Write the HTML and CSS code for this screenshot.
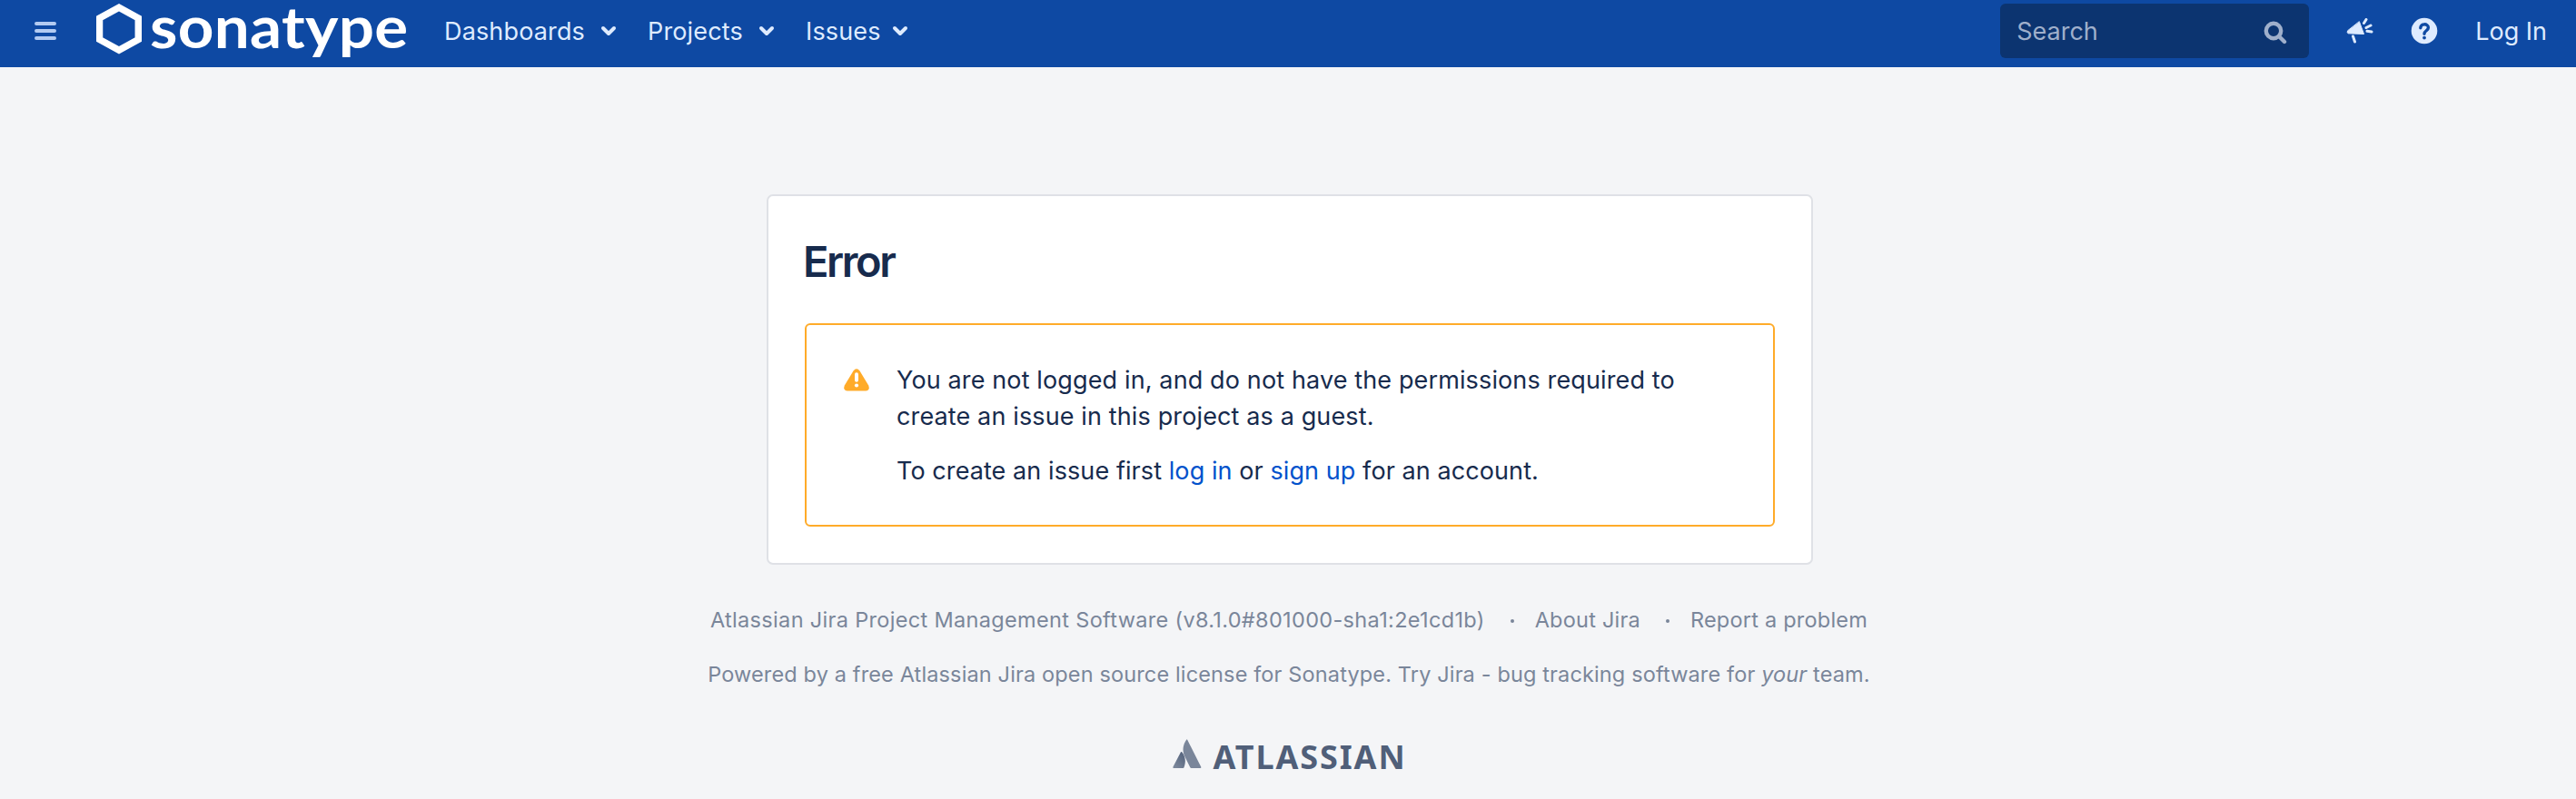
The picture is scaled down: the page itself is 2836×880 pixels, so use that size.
FILE: index.html
```html
<!DOCTYPE html>
<html lang="en">
<head>
<meta charset="utf-8">
<title>Error - Sonatype JIRA</title>
<link rel="stylesheet" href="styles.css">
</head>
<body>
<header class="header">
  <svg class="menu" width="24" height="20" viewBox="0 0 24 20"><path d="M2 2h20M2 10h20M2 18h20"/></svg>
  <a class="brand">
    <svg width="50" height="58" viewBox="0 0 50 58"><path d="M3.500 16 25 4.300 46.300 16v23.500L25 51.300 3.500 39.500z"/></svg>
    <span class="wordmark">sonatype</span>
  </a>
  <nav class="nav">
    <a class="nav-item dash"><span>Dashboards</span><svg class="chev" width="18" height="12" viewBox="0 0 18 12"><path d="m3 3 6 6 6-6"/></svg></a>
    <a class="nav-item proj"><span>Projects</span><svg class="chev" width="18" height="12" viewBox="0 0 18 12"><path d="m3 3 6 6 6-6"/></svg></a>
    <a class="nav-item"><span>Issues</span><svg class="chev" width="18" height="12" viewBox="0 0 18 12"><path d="m3 3 6 6 6-6"/></svg></a>
  </nav>
  <div class="search"><span>Search</span>
    <svg width="26" height="26" viewBox="0 0 26 26"><circle cx="11" cy="11" r="8.200"/><path d="m17 17 6 6"/></svg>
  </div>
  <svg class="horn" width="30" height="28" viewBox="0 0 30 28"><path class="fill" d="M14.500 4 19.500 17.500 2 16.800Q.5 15.500 1.500 14z"/><path d="m7.500 20 2 6M19.500 5.500l2.500-4M22 10.500l5-2.500M23 14.300l5 .7"/></svg>
  <svg class="help" width="30" height="30" viewBox="0 0 30 30"><circle cx="15" cy="15" r="14.300"/><path d="M10.800 11.800c0-5.300 8.600-5.200 8.600-.3 0 3.300-4.400 3.200-4.400 6.700"/><circle class="dot" cx="15" cy="22.600" r="1.900"/></svg>
  <a class="login">Log In</a>
</header>
<main class="card">
  <h1 class="title">Error</h1>
  <div class="warning">
    <svg class="warn-icon" width="28" height="25" viewBox="0 0 28 25"><path class="tri" d="M10.500 2.500q3.500-4.500 7 0L27.200 18.500q2 5.500-3.200 6H4q-5.200-.5-3.200-6z"/><path class="bang" d="M14 6.200v6.600"/><circle cx="14" cy="18.500" r="2.100"/></svg>
    <div class="message">
      <p>You are not logged in, and do not have the permissions required to<br>create an issue in this project as a guest.</p>
      <p>To create an issue first <a>log in</a> or <a>sign up</a> for an account.</p>
    </div>
  </div>
</main>
<footer class="footer">
  <div class="row"><span class="version">Atlassian Jira Project Management Software (v8.1.0#801000-sha1:2e1cd1b)</span><i class="sep"></i><span class="link">About Jira</span><i class="sep"></i><span class="link">Report a problem</span></div>
  <div class="row"><span class="powered">Powered by a free Atlassian Jira open source license for Sonatype. Try Jira - bug tracking software for <em>your</em> team.</span></div>
  <div class="atlassian">
    <svg width="32" height="33" viewBox="0 0 32 33"><defs><linearGradient id="g" x1="1" y1="0" x2=".3" y2="1"><stop offset="0" stop-color="#505f79"/><stop offset="1" stop-color="#7a869a"/></linearGradient></defs><path fill="url(#g)" d="M9 14.300q.7-.7 1.200 0C14 19 15 25 12.500 31.300q-.3.700-1 .7H1q-1-.3-.6-1.200z"/><path fill="#7a869a" d="M15.200.7q.5-.7 1 0L31.300 30.800q.3.900-.6 1.200H20.500q-.8 0-1.200-.7L13 18.500C10.300 12 11.500 6 15.200.7z"/></svg>
    <span>ATLASSIAN</span>
  </div>
</footer>
</body>
</html>
```
FILE: styles.css
```css
* { box-sizing: border-box; }
body { margin: 0; height: 880px; overflow: hidden; background: #f4f5f7; color: #172b4d; font-family: Inter, sans-serif; font-size: 27px; }
svg { display: block; flex: none; fill: none; stroke-linecap: round; stroke-linejoin: round; }
p, h1 { margin: 0; }
.header { display: flex; height: 74px; padding: 4px 32px 0 38px; background: #0e49a3; color: #deebff; white-space: nowrap; }
.menu { margin-top: 20px; stroke: #b3cbf2; stroke-width: 4; }
.brand { display: flex; width: 344px; height: 58px; margin-left: 44px; color: #fff; }
.brand svg { stroke: #fff; stroke-width: 7.500; stroke-linejoin: miter; }
.wordmark { height: 50px; margin-left: 9px; font: 700 64px/50px Lato, sans-serif; letter-spacing: .300px; transform: scaleX(1.08); transform-origin: left; }
.nav { display: flex; margin-left: 39px; line-height: 61px; height: 60px; letter-spacing: .150px; }
.nav-item { display: flex; align-items: center; justify-content: space-between; width: 113px; height: 60px; }
.dash { width: 190px; margin-right: 34px; }
.proj { width: 140px; margin-right: 34px; }
.chev { stroke: #deebff; stroke-width: 4; }
.search { display: flex; align-items: center; justify-content: space-between; width: 340px; height: 60px; margin-left: auto; padding: 0 24px 0 18px; border-radius: 6px; background: #0c3470; color: #9fafcb; }
.search svg { margin-top: 4px; stroke: #9fafcb; stroke-width: 4.400; }
.horn { margin: 16px 0 0 41px; stroke: #deebff; stroke-width: 3; }
.horn .fill { fill: #deebff; stroke-width: 1; }
.help { margin: 15px 0 0 41px; fill: #deebff; }
.help path { fill: none; stroke: #0e49a3; stroke-width: 3.400; }
.help .dot { fill: #0e49a3; }
.login { margin-left: 41px; line-height: 61px; }
.card { width: 1152px; height: 408px; margin: 140px 0 0 844px; padding: 40px; border: 2px solid #dfe1e6; border-radius: 7px; background: #fff; }
.title { height: 100px; margin-left: -2px; font-size: 47px; font-weight: 600; letter-spacing: -2.400px; line-height: 63px; }
.warning { display: flex; height: 224px; padding: 41px 40px 39px; border: 2px solid #ffab29; border-radius: 6px; letter-spacing: .130px; line-height: 40px; }
.warn-icon { margin: 7px 30px 0 1px; }
.tri { fill: #ffab29; }
.bang { stroke: #fff; stroke-width: 4; }
.warn-icon circle { fill: #fff; }
.message { white-space: nowrap; }
.message p + p { margin-top: 20px; letter-spacing: .080px; }
.message a { color: #0052cc; }
.footer { display: flex; flex-direction: column; align-items: center; padding: 40px 0 0 2px; color: #7a869a; font-size: 23.500px; white-space: nowrap; }
.row { display: flex; align-items: center; height: 40px; margin-bottom: 20px; }
.version { letter-spacing: .330px; }
.link { letter-spacing: .220px; }
.powered { letter-spacing: .140px; }
.sep { width: 4px; height: 4px; margin: 4px 23px 0 28px; border-radius: 50%; background: #7a869a; }
.atlassian { display: flex; gap: 12px; margin: 32px 0 0 2px; color: #505f79; font: 700 36px/39px "Noto Sans", sans-serif; letter-spacing: 1.900px; }
```
